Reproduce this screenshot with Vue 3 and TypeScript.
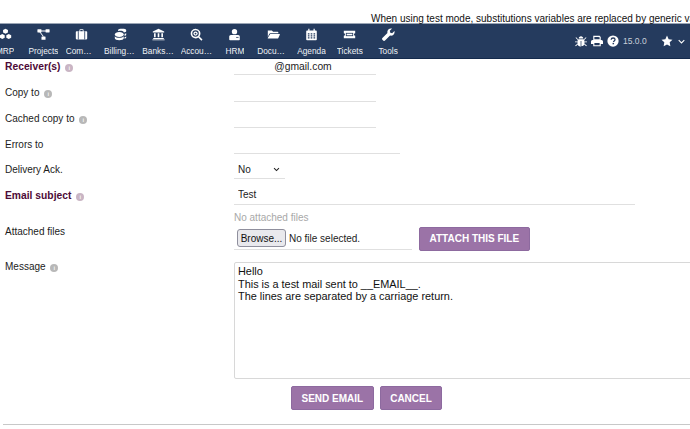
<script setup lang="ts">
interface NavItem { label: string; icon: string }
const navItems: NavItem[] = [
  { label: 'MRP', icon: 'cubes' },
  { label: 'Projects', icon: 'sitemap' },
  { label: 'Commercial', icon: 'case' },
  { label: 'Billing | Payment', icon: 'coins' },
  { label: 'Banks | Cash', icon: 'bank' },
  { label: 'Accounting', icon: 'search' },
  { label: 'HRM', icon: 'user' },
  { label: 'Documents', icon: 'folder' },
  { label: 'Agenda', icon: 'cal' },
  { label: 'Tickets', icon: 'ticket' },
  { label: 'Tools', icon: 'wrench' },
]
</script>

<template>
  <div class="page">
    <div class="notice">When using test mode, substitutions variables are replaced by generic values</div>
    <header class="nav">
      <nav class="menu">
        <a v-for="item in navItems" :key="item.label" class="menu-item">
          <svg class="icon" viewBox="0 0 16 16" fill="#fff">
            <g v-if="item.icon === 'cubes'">
              <path d="M8 1l3 1.500v3L8 7 5 5.500v-3z" />
              <path d="M4 7.500l3 1.500v3l-3 1.500-3-1.500V9z" />
              <path d="M12 7.500l3 1.500v3l-3 1.500L9 12V9z" />
            </g>
            <g v-else-if="item.icon === 'sitemap'">
              <rect x="0.500" y="1.500" width="5" height="4" rx="0.500" />
              <rect x="10.500" y="1.500" width="5" height="4" rx="0.500" />
              <rect x="5.500" y="10.500" width="5" height="4" rx="0.500" />
              <path d="M5 3h6v1.200H5zM3 5h1.200l4.300 5.500H7.200z" />
            </g>
            <g v-else-if="item.icon === 'case'">
              <path d="M5.500 4V2.500A1 1 0 0 1 6.500 1.500h3a1 1 0 0 1 1 1V4H14a1 1 0 0 1 1 1v8a1 1 0 0 1-1 1H2a1 1 0 0 1-1-1V5a1 1 0 0 1 1-1zm1-1.500V4h3V2.500z" fill-rule="evenodd" />
              <path d="M3.500 4h1v10h-1zM11.500 4h1v10h-1z" fill="#253b5e" />
            </g>
            <g v-else-if="item.icon === 'coins'">
              <path d="M5 2.500c0-.9 2.200-1.500 5-1.500s5 .6 5 1.500V4c0 .7-1.300 1.200-3 1.400V5c-.5-.9-2.500-1.500-4-1.500-1 0-2 .1-3 .3z" />
              <path d="M1 8c0-1.700 2.400-3 5.500-3S12 6.300 12 8s-2.400 3-5.500 3S1 9.700 1 8z" />
              <path d="M1 10c1 1.400 3 2 5.500 2s4.500-.6 5.500-2v2.500c0 1.400-2.500 2.500-5.500 2.500S1 13.900 1 12.500zM13 7c1 0 2-.4 2-1v2.500c0 .6-1 1-2 1.300zM13 11c1 0 2-.4 2-1v2c0 .6-1 1-2 1.200z" />
            </g>
            <g v-else-if="item.icon === 'bank'">
              <path d="M8 1l7 3.200V5.500H1V4.200z" />
              <path d="M2.500 6.500h2v5h-2zM7 6.500h2v5H7zM11.500 6.500h2v5h-2z" />
              <path d="M1.500 12.300h13V13.500h-13zM0.500 14h15v1.200H.5z" />
            </g>
            <g v-else-if="item.icon === 'search'">
              <path d="M6.800.8a6 6 0 0 1 4.800 9.600l3.800 3.800-1.400 1.400-3.800-3.800A6 6 0 1 1 6.800.8zm0 2a4 4 0 1 0 0 8 4 4 0 0 0 0-8z" fill-rule="evenodd" />
              <circle cx="6.800" cy="6.800" r="2.600" />
              <circle cx="6.800" cy="6.800" r="1.100" fill="#253b5e" />
            </g>
            <g v-else-if="item.icon === 'user'">
              <circle cx="8" cy="4.500" r="3.300" />
              <path d="M3.500 8.500h9c1.200 0 2 .9 2 2.200V14a1 1 0 0 1-1 1h-11a1 1 0 0 1-1-1v-3.300c0-1.300.8-2.200 2-2.200z" />
              <path d="M10 11h3v1h-3z" fill="#253b5e" />
            </g>
            <g v-else-if="item.icon === 'folder'">
              <path d="M1 3h5l1.500 1.700H13c.6 0 1 .4 1 1V6.500H4.300c-.8 0-1.300.4-1.600 1L1 11z" />
              <path d="M4.500 7.500H15.500c.3 0 .5.300.3.700L13.800 12.500c-.2.300-.5.500-.9.500H1.200c-.3 0-.5-.3-.3-.6L3.600 8c.2-.3.500-.5.900-.5z" />
            </g>
            <g v-else-if="item.icon === 'cal'">
              <path d="M4 1h1.500v2H10.500V1H12v2h1.500a1 1 0 0 1 1 1v10a1 1 0 0 1-1 1h-11a1 1 0 0 1-1-1V4a1 1 0 0 1 1-1H4z" />
              <path d="M3.500 6.500h2v1.500h-2zM7 6.500h2v1.500H7zM10.500 6.500h2v1.500h-2zM3.500 9h2v1.500h-2zM7 9h2v1.500H7zM10.500 9h2v1.500h-2zM3.500 11.500h2V13h-2zM7 11.500h2V13H7zM10.500 11.500h2V13h-2z" fill="#253b5e" />
            </g>
            <g v-else-if="item.icon === 'ticket'">
              <path d="M1 3.500h14v3a1.500 1.500 0 0 0 0 3v3H1v-3a1.500 1.500 0 0 0 0-3z" />
              <path d="M3.500 6h9v4h-9z" fill="#253b5e" />
              <path d="M4.500 7h7v2h-7z" />
            </g>
            <g v-else>
              <path d="M15.300 3.600c.5 1.700 0 3.400-1.200 4.600-1.100 1.100-2.700 1.500-4.200 1.100L4 15.200a2 2 0 0 1-2.900 0l-.3-.3a2 2 0 0 1 0-2.900l5.900-5.900c-.4-1.500 0-3.100 1.100-4.200C9 .7 10.700.2 12.400.7L9.600 3.500l.6 2.300 2.300.6z" />
            </g>
          </svg>
          <span class="menu-label">{{ item.label }}</span>
        </a>
      </nav>
      <div class="tools">
        <svg class="tool-icon" viewBox="0 0 16 16" fill="#fff">
          <path d="M5 4.500C5 2.800 6.300 1.500 8 1.500s3 1.300 3 3zM4.500 5.500h7c.8.800 1.200 1.900 1.200 3.200v2.500c0 2-2 3.500-4.200 3.800V8h-1v7.500c-2.200-.3-4.200-1.800-4.200-3.800V8.700c0-1.300.4-2.400 1.200-3.200z" />
          <path d="M1.500 3l3 3-.8.800-3-3zM14.500 3l.8.800-3 3-.8-.8zM0 8.500h3.500v1.200H0zM12.500 8.500H16v1.200h-3.500zM3.200 11.500l.7 1-2.900 2.500-.8-1zM12.800 11.500l3 2.500-.8 1-2.900-2.500z" />
        </svg>
        <svg class="tool-icon" viewBox="0 0 16 16" fill="#fff">
          <path d="M3 1h8.500L13 2.500V7H3zM4.500 2.500V5.500h7V3H10.500L10 2.500z" fill-rule="evenodd" />
          <path d="M2 6.500h12a2 2 0 0 1 2 2V12h-3v3H3v-3H0V8.500a2 2 0 0 1 2-2zM4.500 10.500v3h7v-3z" fill-rule="evenodd" />
        </svg>
        <svg class="tool-icon" viewBox="0 0 16 16">
          <circle cx="8" cy="8" r="7.500" fill="#fff" />
          <path d="M5.500 6.300C5.600 4.800 6.700 4 8.200 4c1.400 0 2.500.8 2.500 2.100 0 1.800-2 1.800-2 3.200" fill="none" stroke="#253b5e" stroke-width="1.700" />
          <rect x="7.400" y="10.500" width="2" height="1.900" fill="#253b5e" />
        </svg>
        <span class="version">15.0.0</span>
        <svg class="star" viewBox="0 0 16 16" fill="#fff">
          <path d="M8 .8l2.200 4.700 5.100.7-3.700 3.600.9 5.100L8 12.500l-4.500 2.400.9-5.100L.7 6.200l5.100-.7z" />
        </svg>
        <svg class="chev" viewBox="0 0 10 6" fill="none" stroke="#fff" stroke-width="1.500">
          <path d="M1 1l4 4 4-4" />
        </svg>
      </div>
    </header>

    <form class="form" @submit.prevent>
      <div class="row row-receiver">
        <label class="label required">Receiver(s) <i class="info">i</i></label>
        <input class="field w-short centered" value="@gmail.com" />
      </div>
      <div class="row">
        <label class="label">Copy to <i class="info">i</i></label>
        <input class="field w-short" />
      </div>
      <div class="row">
        <label class="label">Cached copy to <i class="info">i</i></label>
        <input class="field w-short" />
      </div>
      <div class="row">
        <label class="label">Errors to</label>
        <input class="field w-mid" />
      </div>
      <div class="row row-ack">
        <label class="label">Delivery Ack.</label>
        <div class="select-box">
          <span>No</span>
          <svg class="select-chev" viewBox="0 0 10 6" fill="none" stroke="#222" stroke-width="1.500"><path d="M1.500 1l3.500 3.500L8.500 1" /></svg>
        </div>
      </div>
      <div class="row">
        <label class="label required">Email subject <i class="info">i</i></label>
        <input class="field w-long" value="Test" />
      </div>
      <div class="row row-files">
        <label class="label">Attached files</label>
        <div class="files">
          <div class="no-files">No attached files</div>
          <div class="file-line">
            <div class="file-input">
              <button type="button" class="browse">Browse...</button>
              <span>No file selected.</span>
            </div>
            <button type="button" class="btn">ATTACH THIS FILE</button>
          </div>
        </div>
      </div>
      <div class="row row-message">
        <label class="label">Message <i class="info">i</i></label>
        <textarea class="message" spellcheck="false">Hello
This is a test mail sent to __EMAIL__.
The lines are separated by a carriage return.</textarea>
      </div>
      <div class="actions">
        <button type="button" class="btn">SEND EMAIL</button>
        <button type="button" class="btn">CANCEL</button>
      </div>
    </form>
    <hr class="rule" />
  </div>
</template>

<style>
html, body { margin: 0; overflow: hidden; }
</style>

<style scoped>
.page {
  width: 690px;
  height: 429px;
  overflow: hidden;
  background: #fff;
  font-family: "Liberation Sans", Arial, sans-serif;
  font-size: 10px;
  color: #1c1c1c;
}
.notice {
  height: 23px;
  box-sizing: border-box;
  padding: 12px 0 0 371px;
  line-height: 13px;
  color: #111;
  white-space: nowrap;
}
.nav {
  height: 36px;
  box-sizing: border-box;
  display: flex;
  justify-content: space-between;
  background: #253b5e;
  border-top: 1px solid #9aa5b5;
  border-bottom: 1px solid #142a4c;
  color: #fff;
}
.menu { display: flex; margin-left: -14px; }
.menu-item {
  width: 38.300px;
  display: flex;
  flex-direction: column;
  align-items: center;
  padding-top: 4px;
  box-sizing: border-box;
}
.icon { width: 13px; height: 13px; display: block; }
.menu-label {
  display: block;
  max-width: 32px;
  margin-top: 4px;
  font-size: 8.300px;
  line-height: 12px;
  color: #eef1f5;
  white-space: nowrap;
  overflow: hidden;
  text-overflow: ellipsis;
}
.tools { display: flex; align-items: center; padding: 0 5px 0 0; }
.tool-icon { width: 12px; height: 12px; margin-right: 4px; }
.version { font-size: 8.500px; color: #c9d0da; width: 32px; }
.star { width: 12px; height: 12px; margin-left: 6px; }
.chev { width: 7px; height: 5px; margin-left: 5px; }
.form { display: flex; flex-direction: column; }
.row {
  display: grid;
  grid-template-columns: 234px 1fr;
  align-items: center;
  height: 26px;
}
.row-receiver { height: 20px; align-items: start; }
.row-ack { height: 25px; }
.label { padding: 2px 0 0 5px; line-height: 14px; white-space: nowrap; }
.row-receiver .label { padding-top: 1px; }
.row-ack .label { padding-top: 0; }
.required { font-weight: 700; color: #4d0a37; font-size: 10.300px; }
.info {
  display: inline-block;
  width: 8px;
  height: 8px;
  margin-left: 2px;
  border-radius: 50%;
  background: #b8b8b8;
  color: #f4f4f4;
  font-size: 6px;
  line-height: 8px;
  font-style: normal;
  font-weight: 700;
  text-align: center;
  vertical-align: 0;
}
.required .info { background: #c9b5c4; }
.field {
  display: block;
  box-sizing: border-box;
  height: 19px;
  padding: 0 4px;
  border: 0;
  border-bottom: 1px solid #e0e0e0;
  background: transparent;
  font: inherit;
  color: inherit;
  outline: none;
}
.w-short { width: 142px; }
.w-mid { width: 166px; }
.w-long { width: 401px; }
.centered { text-align: center; height: 16px; font-size: 10.300px; padding: 0 8px 0 4px; }
.select-box {
  box-sizing: border-box;
  width: 51px;
  height: 19px;
  display: flex;
  align-items: center;
  justify-content: space-between;
  padding: 0 5px 0 4px;
  border-bottom: 1px solid #e0e0e0;
}
.select-chev { width: 7px; height: 5px; }
.row-files { height: 52px; box-sizing: border-box; padding-bottom: 8px; }
.row-files .label { margin-top: 2px; }
.files { display: flex; flex-direction: column; }
.no-files { color: #a8a8a8; line-height: 16px; margin-bottom: 1px; }
.file-line { display: flex; align-items: center; gap: 7px; }
.file-input {
  box-sizing: border-box;
  width: 178px;
  height: 22px;
  display: flex;
  align-items: center;
  gap: 3px;
  padding-left: 3px;
  border-bottom: 1px solid #e0e0e0;
}
.browse {
  box-sizing: border-box;
  height: 18px;
  width: 49px;
  padding: 0;
  border: 1px solid #8f8f9d;
  border-radius: 3px;
  background: #e9e9ed;
  font: inherit;
  color: #111;
}
.btn {
  box-sizing: border-box;
  height: 24px;
  padding: 0 9.500px;
  border: 1px solid #8d6a9f;
  border-radius: 2px;
  background: #9b73a7;
  color: #fff;
  font-family: inherit;
  font-size: 10px;
  font-weight: 700;
}
.row-message { height: 117px; align-items: start; margin-top: 2px; }
.row-message .label { margin-top: -4px; }
.message {
  display: block;
  box-sizing: border-box;
  width: 520px;
  height: 117px;
  padding: 2px 3px;
  border: 1px solid #d8d8d8;
  border-radius: 2px;
  font: inherit;
  font-size: 10.900px;
  line-height: 12.500px;
  color: #111;
  resize: none;
  outline: none;
}
.actions { display: flex; gap: 6px; padding: 7px 0 0 291px; }
.rule { margin: 14px 0 0 3px; border: 0; border-top: 1px solid #c8c8c8; }
</style>
